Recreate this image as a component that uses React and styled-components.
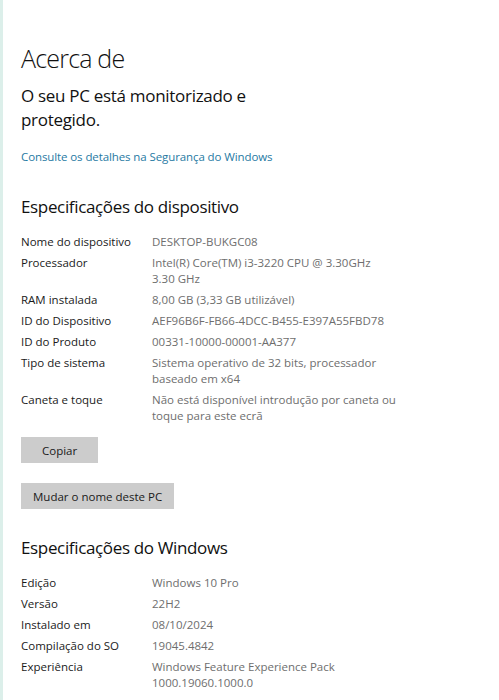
import React from "react";
import styled, { createGlobalStyle } from "styled-components";

const GlobalStyle = createGlobalStyle`
  html, body {
    margin: 0;
    padding: 0;
    background: #ffffff;
  }
  body {
    font-family: "Open Sans", "Noto Sans", sans-serif;
    color: #1a1a1a;
  }
`;

const deviceSpecs = [
  { label: "Nome do dispositivo", value: "DESKTOP-BUKGC08" },
  { label: "Processador", value: "Intel(R) Core(TM) i3-3220 CPU @ 3.30GHz\n3.30 GHz" },
  { label: "RAM instalada", value: "8,00 GB (3,33 GB utilizável)" },
  { label: "ID do Dispositivo", value: "AEF96B6F-FB66-4DCC-B455-E397A55FBD78" },
  { label: "ID do Produto", value: "00331-10000-00001-AA377" },
  { label: "Tipo de sistema", value: "Sistema operativo de 32 bits, processador\nbaseado em x64" },
  { label: "Caneta e toque", value: "Não está disponível introdução por caneta ou\ntoque para este ecrã" },
];

const windowsSpecs = [
  { label: "Edição", value: "Windows 10 Pro" },
  { label: "Versão", value: "22H2" },
  { label: "Instalado em", value: "08/10/2024" },
  { label: "Compilação do SO", value: "19045.4842" },
  { label: "Experiência", value: "Windows Feature Experience Pack\n1000.19060.1000.0" },
];

const Page = styled.div`
  min-height: 700px;
  box-sizing: border-box;
  border-left: 3px solid #dcefea;
  padding: 40px 0 0 18px;
`;

const Title = styled.h1`
  margin: 0;
  font-size: 25px;
  font-weight: 300;
  letter-spacing: -0.8px;
  line-height: 36px;
  color: #111;
`;

const Status = styled.p`
  margin: 8px 0 0;
  font-size: 17px;
  font-weight: 400;
  letter-spacing: -0.3px;
  line-height: 24px;
  color: #111;
  width: 250px;
`;

const Link = styled.a`
  display: block;
  margin-top: 16px;
  font-size: 11.5px;
  letter-spacing: -0.1px;
  line-height: 18px;
  color: #1f7aa3;
  text-decoration: none;
  cursor: pointer;
`;

const SectionTitle = styled.h2`
  margin: ${(p) => p.$top}px 0 14px;
  font-size: 17px;
  font-weight: 400;
  letter-spacing: -0.35px;
  line-height: 26px;
  color: #111;
`;

const SpecList = styled.dl`
  margin: 0;
  display: grid;
  grid-template-columns: 131px 1fr;
  row-gap: 5px;
  font-size: 11.5px;
  line-height: 16px;
`;

const Label = styled.dt`
  margin: 0;
  color: #1a1a1a;
`;

const Value = styled.dd`
  margin: 0;
  color: #6e6e6e;
  white-space: pre-line;
`;

const Button = styled.button`
  display: block;
  margin-top: ${(p) => p.$top}px;
  height: 26px;
  padding: 0 ${(p) => p.$pad}px;
  border: none;
  background: #cccccc;
  font-family: inherit;
  font-size: 11.5px;
  color: #1a1a1a;
  cursor: pointer;
`;

const Specs = ({ items }) => (
  <SpecList>
    {items.map((it) => (
      <React.Fragment key={it.label}>
        <Label>{it.label}</Label>
        <Value>{it.value}</Value>
      </React.Fragment>
    ))}
  </SpecList>
);

export default function App() {
  return (
    <>
      <GlobalStyle />
      <Page>
        <Title>Acerca de</Title>
        <Status>O seu PC está monitorizado e protegido.</Status>
        <Link>Consulte os detalhes na Segurança do Windows</Link>
        <SectionTitle $top={28}>Especificações do dispositivo</SectionTitle>
        <Specs items={deviceSpecs} />
        <Button $top={13} $pad={21}>Copiar</Button>
        <Button $top={20} $pad={12}>Mudar o nome deste PC</Button>
        <SectionTitle $top={26}>Especificações do Windows</SectionTitle>
        <Specs items={windowsSpecs} />
      </Page>
    </>
  );
}
